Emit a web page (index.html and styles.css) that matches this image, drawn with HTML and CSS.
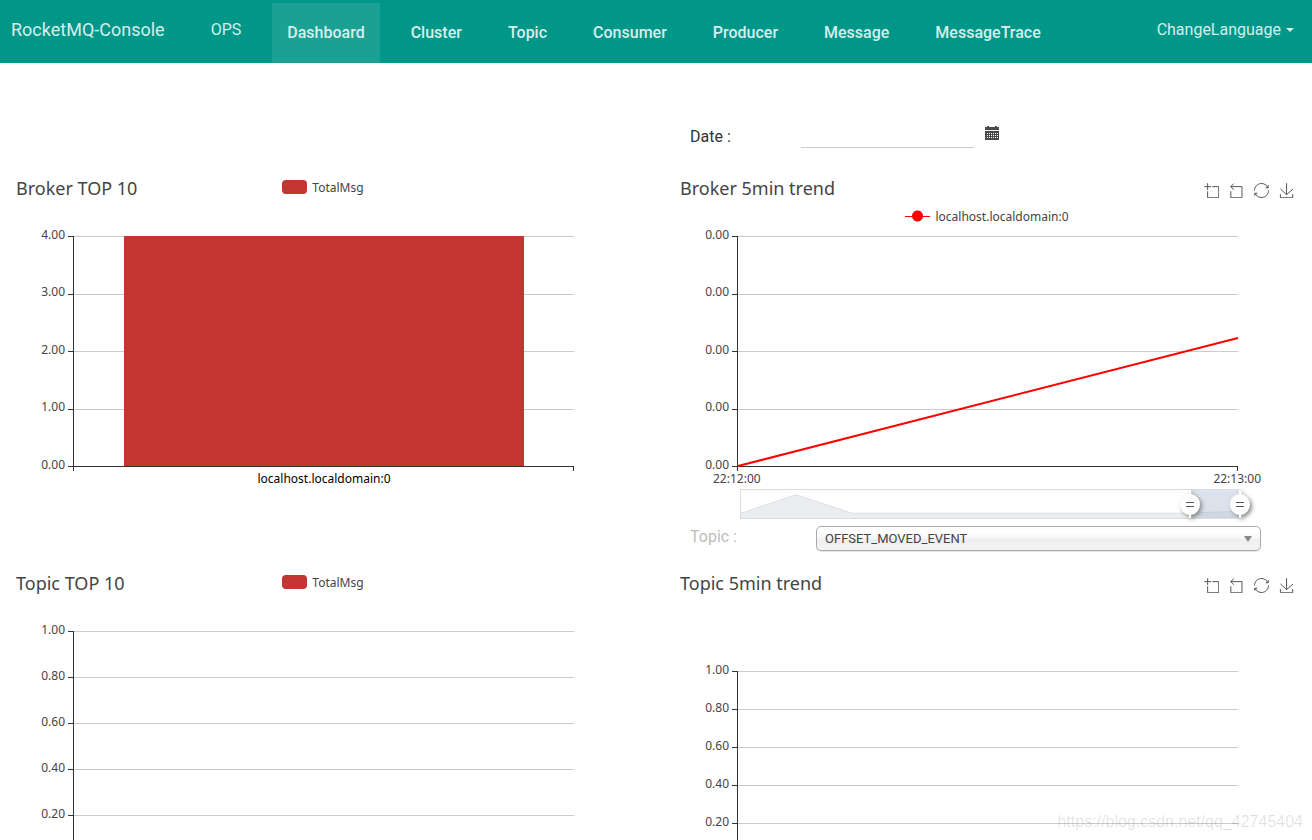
FILE: index.html
```html
<!DOCTYPE html>
<html lang="en">
<head>
<meta charset="utf-8">
<title>RocketMQ-Console</title>
<link rel="stylesheet" href="styles.css">
</head>
<body>
<svg class="sprite" aria-hidden="true">
  <symbol id="i-zoom" viewBox="-1 -1 60 60"><path d="M0,13.5h26.9 M13.5,26.9V0 M32.1,13.5H58V58H13.5V32.1"/></symbol>
  <symbol id="i-back" viewBox="3 -1 60 60"><path d="M22,1.4L9.9,13.5l12.3,12.3 M10.3,13.5H54.9v44.6H10.3v-26"/></symbol>
  <symbol id="i-restore" viewBox="0 0 60 60"><path d="M47,18.9h9.8V8.7 M56.3,20.1C52.1,9,40.5,0.6,26.8,2.1C12.6,3.7,1.6,16.2,2.1,30.6 M13,41.1H3.1v10.2 M3.7,39.9c4.2,11.1,15.8,19.5,29.5,18c14.2-1.6,25.2-14.1,24.7-28.5"/></symbol>
  <symbol id="i-save" viewBox="-1 -1 60 60"><path d="M4.7,22.9L29.3,45.5L54.7,23.4M4.6,43.6L4.6,58L53.8,58L53.8,43.6M29.2,45.1L29.2,0"/></symbol>
</svg>
<nav class="navbar">
  <a class="brand" href="#">RocketMQ-Console</a>
  <a class="nav-link" href="#">OPS</a>
  <ul class="tabs">
    <li><a class="tab tab-active" href="#">Dashboard</a></li>
    <li><a class="tab" href="#">Cluster</a></li>
    <li><a class="tab" href="#">Topic</a></li>
    <li><a class="tab" href="#">Consumer</a></li>
    <li><a class="tab" href="#">Producer</a></li>
    <li><a class="tab" href="#">Message</a></li>
    <li><a class="tab" href="#">MessageTrace</a></li>
  </ul>
  <button class="language" type="button">ChangeLanguage <span class="caret"></span></button>
</nav>

<main class="board">
  <form class="field date-field">
    <label class="field-label" for="date">Date :</label>
    <input class="date-input" id="date" type="text">
    <svg class="calendar" viewBox="0 0 14 14" aria-hidden="true">
      <path fill="#4a4a4a" d="M0 1h2V0h2v1h6V0h2v1h2v3H0zM0 5h14v9H0z"/>
      <path stroke="#fff" stroke-dasharray="1 1" d="M2 7.5h11M2 9.5h11M2 11.5h11"/>
    </svg>
  </form>

  <section class="chart">
    <header class="chart-head">
      <h2 class="chart-title">Broker TOP 10</h2>
      <p class="legend"><span class="swatch"></span>TotalMsg</p>
    </header>
    <div class="plot">
      <ul class="ticks">
        <li><span>4.00</span></li><li><span>3.00</span></li><li><span>2.00</span></li><li><span>1.00</span></li><li><span>0.00</span></li>
      </ul>
      <div class="area area-ends"><div class="bar"></div></div>
    </div>
    <p class="category">localhost.localdomain:0</p>
  </section>

  <section class="chart">
    <header class="chart-head">
      <h2 class="chart-title">Broker 5min trend</h2>
      <div class="toolbox">
        <button type="button" aria-label="Zoom"><svg><use href="#i-zoom"/></svg></button>
        <button type="button" aria-label="Zoom reset"><svg><use href="#i-back"/></svg></button>
        <button type="button" aria-label="Restore"><svg><use href="#i-restore"/></svg></button>
        <button type="button" aria-label="Save"><svg><use href="#i-save"/></svg></button>
      </div>
      <p class="legend legend-low"><span class="line-mark"></span>localhost.localdomain:0</p>
    </header>
    <div class="plot">
      <ul class="ticks">
        <li><span>0.00</span></li><li><span>0.00</span></li><li><span>0.00</span></li><li><span>0.00</span></li><li><span>0.00</span></li>
      </ul>
      <div class="area area-ends">
        <svg class="series" viewBox="0 0 500 230" preserveAspectRatio="none"><path d="M0 230L500 102"/></svg>
      </div>
    </div>
    <div class="times"><span>22:12:00</span><span>22:13:00</span></div>
    <div class="range">
      <svg class="range-shadow" viewBox="0 0 500 29" preserveAspectRatio="none">
        <path fill="#ebedef" d="M0 29V24L55 5L111 24H444L500 22V29z"/>
        <path fill="none" stroke="#d9dde2" d="M0 24L55 5L111 24H444L500 22"/>
      </svg>
      <div class="range-window">
        <svg class="handle" viewBox="0 0 24 30"><use href="#grip"/></svg>
        <svg class="handle" viewBox="0 0 24 30">
          <g id="grip"><path d="M11 0h2v4.100a10.500 10.500 0 0 1 0 20.800v3h-2v-3a10.500 10.500 0 0 1 0-20.800z" fill="#fff"/><path d="M8 12.500h8M8 16.500h8" stroke="#555" stroke-width="1"/></g>
        </svg>
      </div>
    </div>
  </section>

  <form class="field topic-field">
    <label class="field-label field-label-muted" for="topic">Topic :</label>
    <div class="select-wrap">
      <select class="topic-select" id="topic"><option>OFFSET_MOVED_EVENT</option></select>
    </div>
  </form>

  <section class="chart">
    <header class="chart-head">
      <h2 class="chart-title">Topic TOP 10</h2>
      <p class="legend"><span class="swatch"></span>TotalMsg</p>
    </header>
    <div class="plot">
      <ul class="ticks">
        <li><span>1.00</span></li><li><span>0.80</span></li><li><span>0.60</span></li><li><span>0.40</span></li><li><span>0.20</span></li><li></li>
      </ul>
      <div class="area"></div>
    </div>
  </section>

  <section class="chart">
    <header class="chart-head chart-head-tall">
      <h2 class="chart-title">Topic 5min trend</h2>
      <div class="toolbox">
        <button type="button" aria-label="Zoom"><svg><use href="#i-zoom"/></svg></button>
        <button type="button" aria-label="Zoom reset"><svg><use href="#i-back"/></svg></button>
        <button type="button" aria-label="Restore"><svg><use href="#i-restore"/></svg></button>
        <button type="button" aria-label="Save"><svg><use href="#i-save"/></svg></button>
      </div>
    </header>
    <div class="plot plot-short">
      <ul class="ticks">
        <li><span>1.00</span></li><li><span>0.80</span></li><li><span>0.60</span></li><li><span>0.40</span></li><li><span>0.20</span></li><li></li>
      </ul>
      <div class="area"></div>
    </div>
  </section>
</main>
<p class="watermark">https://blog.csdn.net/qq_42745404</p>
</body>
</html>
```
FILE: styles.css
```css
* { box-sizing: border-box; }
body {
  margin: 0;
  height: 100vh;
  overflow: hidden;
  background: #fff;
  color: #333;
  font-family: Roboto, sans-serif;
  font-size: 15px;
}
ul, p, h2 { margin: 0; padding: 0; list-style: none; font-weight: 400; }
button { border: 0; padding: 0; background: none; font: inherit; color: inherit; }
.sprite { position: absolute; width: 0; height: 0; }

.navbar {
  display: flex;
  height: 63px;
  padding: 0 18px 0 11px;
  background: #009688;
  color: #d5efec;
  line-height: 60px;
  font-size: 16px;
}
.navbar a { color: inherit; text-decoration: none; }
.brand { margin-right: 31px; font-size: 18px; }
.nav-link { padding: 0 15px; }
.tabs { display: flex; gap: 16px; margin-left: 16px; padding-top: 3px; }
.tab { display: block; padding: 0 15px; font-weight: 500; }
.tab-active { background: #1ba193; }
.language { display: flex; align-items: center; gap: 5px; height: 60px; margin-left: auto; }
.caret { border: 4px solid transparent; border-top-color: currentColor; border-bottom: 0; }

.board {
  display: grid;
  grid-template-columns: 1fr 1fr;
  column-gap: 38px;
  padding: 0 11px;
}
.field { grid-column: 2; display: flex; padding-left: 15px; }
.field-label { font-size: 16px; line-height: 24px; }
.field-label-muted { color: #bdbdbd; line-height: 22px; }
.date-field { height: 113px; padding-top: 62px; }
.date-field .field-label { width: 111px; }
.date-input {
  width: 173px;
  height: 23px;
  border: 0;
  border-bottom: 1px solid #ccc;
  font: inherit;
}
.calendar { width: 14px; height: 14px; margin-left: 11px; margin-top: 1px; }
.topic-field { height: 45px; margin-top: 2px; }
.topic-field .field-label { width: 126px; }
.select-wrap { position: relative; flex: 1; margin-right: 40px; }
.topic-select {
  appearance: none;
  width: 100%;
  height: 25px;
  padding: 0 8px;
  border: 1px solid #aaa;
  border-radius: 5px;
  background: linear-gradient(#fff 20%, #f6f6f6 50%, #eee 52%, #f4f4f4 100%);
  box-shadow: 0 1px 1px rgba(0, 0, 0, 0.1);
  color: #444;
  font-family: Roboto, sans-serif;
  font-size: 13px;
}
.select-wrap::after {
  content: "";
  position: absolute;
  right: 9px;
  top: 10px;
  border: 4px solid transparent;
  border-top: 6px solid #888;
  border-bottom: 0;
}

.chart { font-family: "Noto Sans", sans-serif; font-size: 12px; color: #444; }
.chart-head {
  display: grid;
  grid-template-columns: 1fr auto 1fr;
  grid-template-rows: 26px 28px;
  height: 60px;
  padding: 0 7px 0 5px;
}
.chart-head-tall { height: 100px; }
.chart-title { font-size: 18px; line-height: 24px; white-space: nowrap; }
.legend { display: flex; align-items: center; gap: 5px; height: 22px; }
.swatch { width: 25px; height: 14px; border-radius: 4px; background: #c23531; }
.legend-low { grid-column: 1 / -1; grid-row: 2; justify-self: center; align-self: center; }
.line-mark {
  width: 25px;
  height: 12px;
  background: radial-gradient(circle, red 5px, transparent 6px), linear-gradient(red, red) center / 100% 1px no-repeat;
}
.toolbox { grid-column: 3; display: flex; gap: 10px; justify-content: flex-end; padding-top: 7px; }
.toolbox button { width: 15px; height: 15px; }
.toolbox svg { display: block; width: 15px; height: 15px; }
symbol path { fill: none; stroke: #555; stroke-width: 4; }

.plot { position: relative; height: 231px; }
.plot-short { height: 191px; }
.ticks { display: flex; flex-direction: column; justify-content: space-between; height: 100%; padding-right: 63px; }
.ticks li {
  display: flex;
  align-items: center;
  height: 1px;
  background: linear-gradient(#333, #333) 57px 0 / 5px 1px no-repeat, linear-gradient(#ccc, #ccc) 62px 0 / 100% 1px no-repeat;
}
.ticks span { width: 54px; margin-bottom: 4px; text-align: right; line-height: 12px; }
.area { position: absolute; inset: 0 63px 0 62px; border-left: 1px solid #333; border-bottom: 1px solid #333; }
.area-ends::before, .area-ends::after {
  content: "";
  position: absolute;
  top: 100%;
  width: 1px;
  height: 5px;
  background: #333;
}
.area-ends::before { left: -1px; }
.area-ends::after { right: 0; }
.bar { height: 100%; margin: 0 10%; background: #c23531; }
.series { display: block; width: 100%; height: 100%; overflow: visible; }
.series path { fill: none; stroke: red; stroke-width: 2; }
.category { line-height: 14px; padding: 5px 0 36px; text-align: center; color: #000; }
.times { display: flex; justify-content: space-between; line-height: 14px; padding: 5px 40px 0 38px; }
.range { position: relative; height: 30px; margin: 3px 60px 5px 65px; border: 1px solid #d9dde2; }
.range-shadow { display: block; width: 100%; height: 100%; }
.range-window { position: absolute; inset: 0 0 0 90%; background: rgba(167, 183, 204, 0.4); }
.handle { position: absolute; left: -12px; top: 0; width: 24px; height: 30px; filter: drop-shadow(2px 2px 2px #888); }
.handle + .handle { left: auto; right: -12px; }
.watermark { position: absolute; right: 9px; bottom: 8px; color: rgba(0, 0, 0, 0.12); font-family: "Liberation Sans", sans-serif; font-size: 16px; line-height: 20px; }
```
